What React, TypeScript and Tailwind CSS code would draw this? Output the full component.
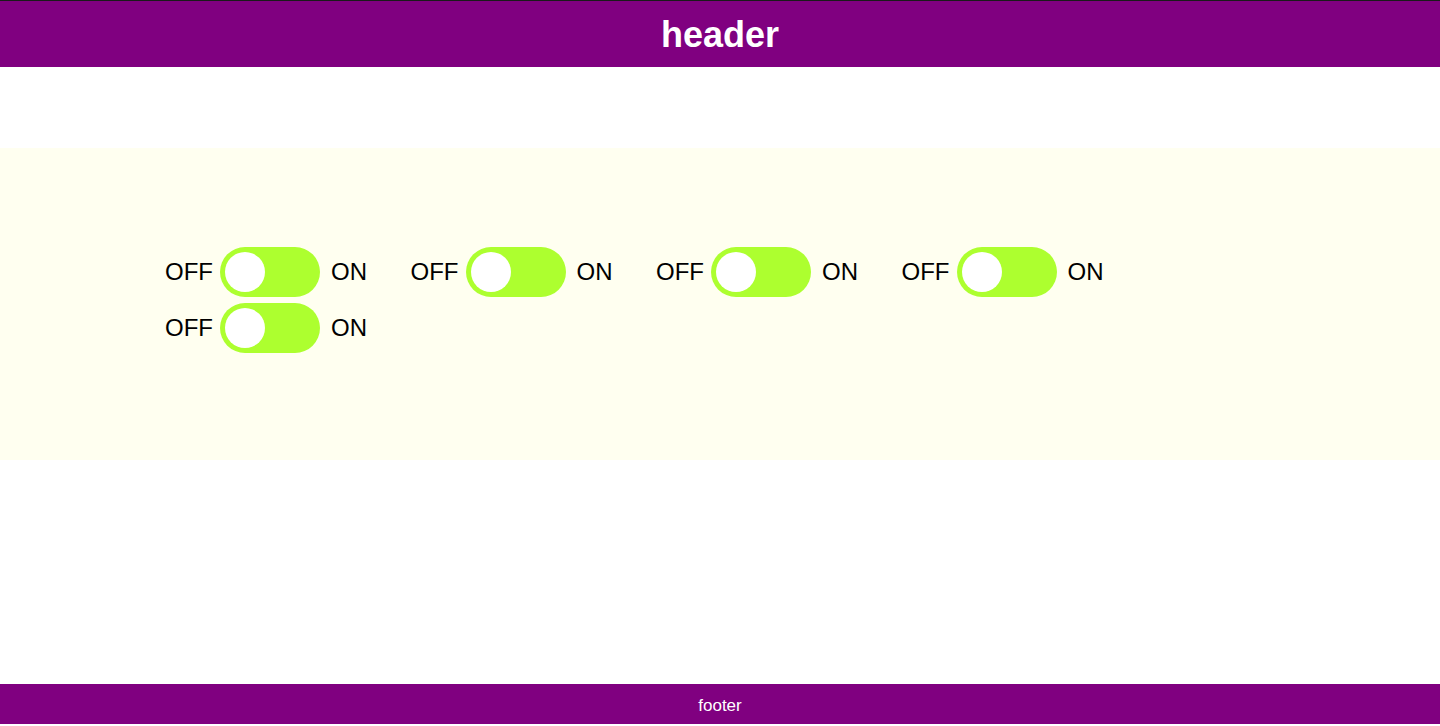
import { useState } from "react";

function Toggle() {
  const [on, setOn] = useState(false);
  return (
    <div className="flex items-center">
      <span className="text-[24px] leading-none text-black">OFF</span>
      <button
        type="button"
        onClick={() => setOn(!on)}
        className="ml-[7px] flex h-[50px] w-[100px] items-center rounded-full bg-[#adff2f] px-[5px]"
      >
        <span
          className={
            on
              ? "ml-auto block h-[40px] w-[40px] rounded-full bg-white"
              : "block h-[40px] w-[40px] rounded-full bg-white"
          }
        />
      </button>
      <span className="ml-[11px] text-[24px] leading-none text-black">ON</span>
    </div>
  );
}

export default function App() {
  const toggles = [1, 2, 3, 4, 5];

  return (
    <div
      className="flex h-[726px] flex-col bg-white"
      style={{ fontFamily: '"Liberation Sans", Arial, sans-serif' }}
    >
      <header className="flex h-[67px] items-center justify-center border-t border-[#1a1a1a] bg-[#800080] pt-[2px]">
        <h1 className="text-[36px] font-bold leading-none text-white">header</h1>
      </header>

      {/* toggles */}
      <section className="mt-[81px] h-[312px] bg-[#fffff0] px-[165px] pt-[99px]">
        <div className="flex flex-wrap gap-x-[43.5px] gap-y-[6px]">
          {toggles.map((t) => (
            <Toggle key={t} />
          ))}
        </div>
      </section>

      <footer className="mb-[2px] mt-auto flex h-[40px] items-center justify-center bg-[#800080] pt-[3px]">
        <span className="text-[17px] text-white">footer</span>
      </footer>
    </div>
  );
}
